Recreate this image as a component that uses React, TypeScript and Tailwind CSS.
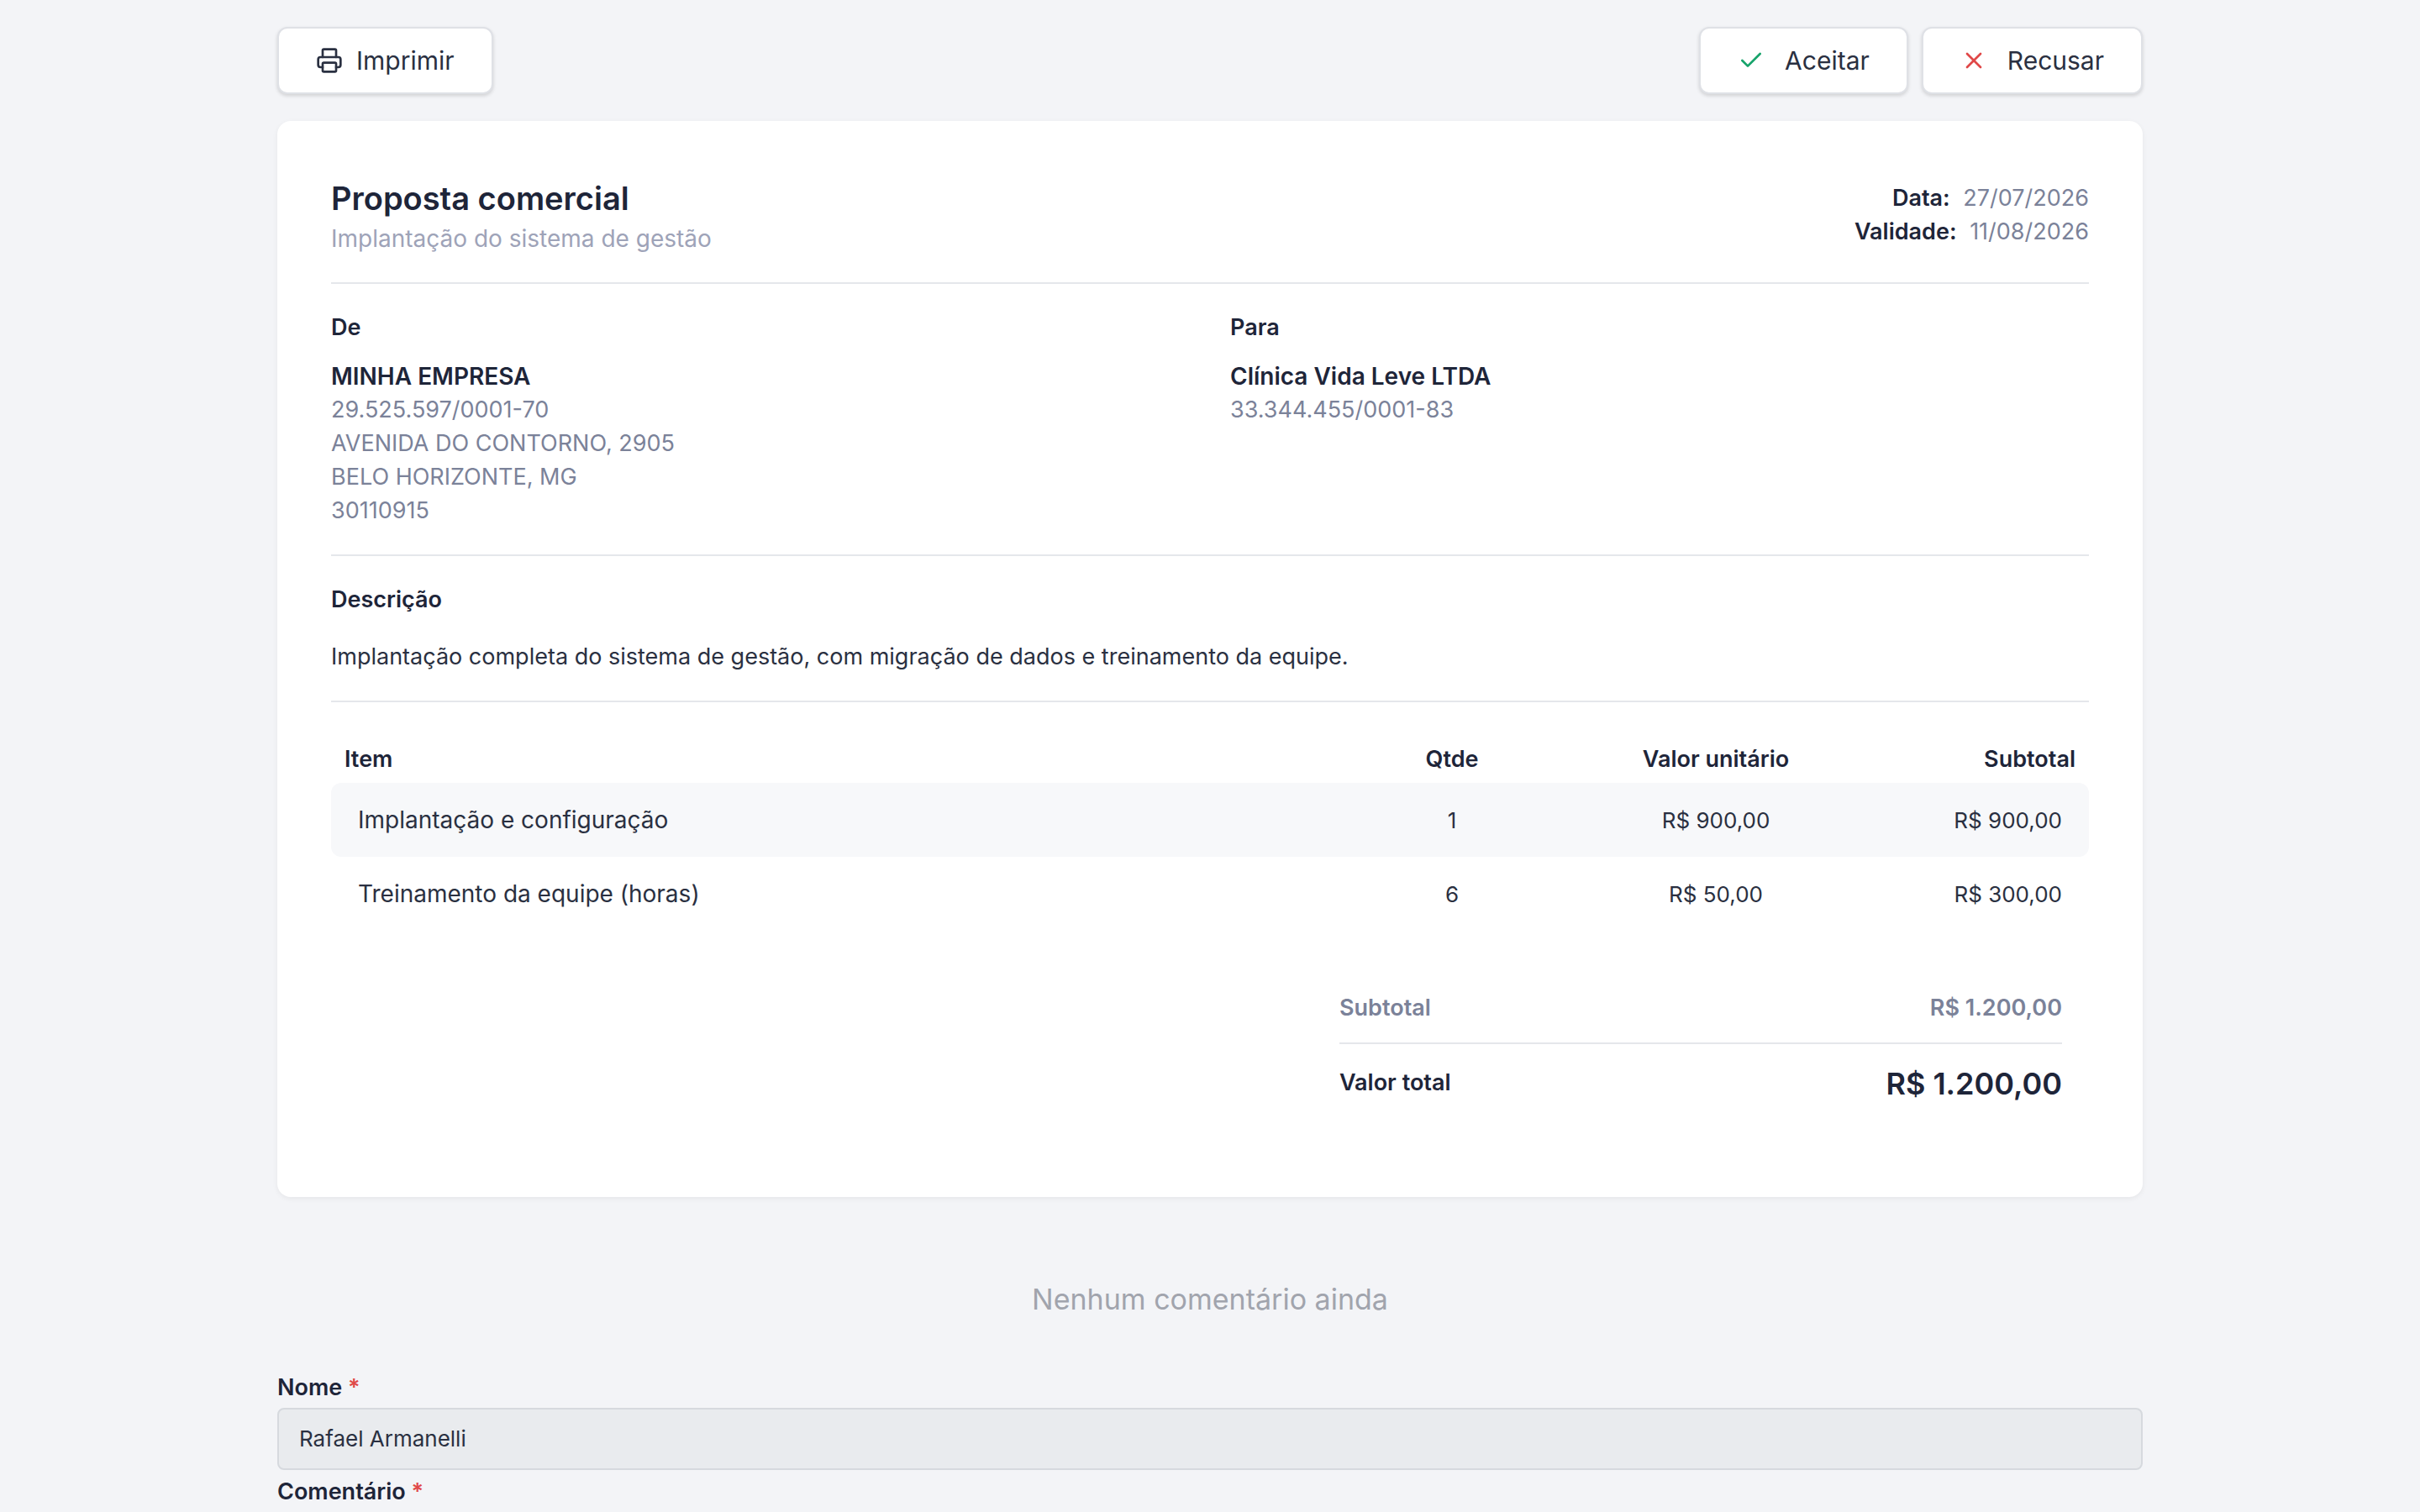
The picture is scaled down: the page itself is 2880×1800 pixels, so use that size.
import { Check, X, Printer } from 'lucide-react';

const items = [
  { name: 'Implantação e configuração', qty: 1, unit: 'R$ 900,00', subtotal: 'R$ 900,00' },
  { name: 'Treinamento da equipe (horas)', qty: 6, unit: 'R$ 50,00', subtotal: 'R$ 300,00' },
];

export default function App() {
  return (
    <div className="min-h-screen bg-[#f3f4f7] text-[#1e2539]" style={{ fontFamily: 'Inter, "Noto Sans", sans-serif' }}>
      <div className="[zoom:2]">
        <div className="mx-auto w-[1110px] pt-4">
          {/* Toolbar */}
          <div className="flex items-center justify-between">
            <button className="flex h-10 items-center gap-2 rounded-md border border-[#dfe1e6] bg-white px-[22px] text-[15px] text-[#2a3041] shadow-[0_1px_2px_rgba(0,0,0,0.15)]">
              <Printer className="h-4 w-4" strokeWidth={2} />
              Imprimir
            </button>
            <div className="flex gap-2">
              <button className="flex h-10 items-center gap-3 rounded-md border border-[#dfe1e6] bg-white px-[22px] text-[15px] text-[#2a3041] shadow-[0_1px_2px_rgba(0,0,0,0.15)]">
                <Check className="h-4 w-4 text-[#16a36a]" strokeWidth={2} />
                Aceitar
              </button>
              <button className="flex h-10 items-center gap-3 rounded-md border border-[#dfe1e6] bg-white px-[22px] text-[15px] text-[#2a3041] shadow-[0_1px_2px_rgba(0,0,0,0.15)]">
                <X className="h-4 w-4 text-[#e04848]" strokeWidth={2} />
                Recusar
              </button>
            </div>
          </div>

          {/* Card */}
          <div className="mt-4 rounded-lg bg-white px-8 pb-[54px] pt-8 shadow-[0_1px_3px_rgba(0,0,0,0.06)]">
            <div className="flex items-start justify-between border-b border-[#e5e7eb] pb-4">
              <div>
                <h1 className="text-[19px] font-semibold leading-7 text-[#1e2539]">Proposta comercial</h1>
                <p className="text-[14px] leading-5 text-[#9ea3b8]">Implantação do sistema de gestão</p>
              </div>
              <div className="pt-1 text-right text-[13.5px] leading-5">
                <div><span className="font-semibold">Data:</span> <span className="ml-1 text-[#7b8299]">27/07/2026</span></div>
                <div><span className="font-semibold">Validade:</span> <span className="ml-1 text-[#7b8299]">11/08/2026</span></div>
              </div>
            </div>

            <div className="grid grid-cols-2 gap-6 border-b border-[#e5e7eb] pb-4 pt-4 text-[13.5px]">
              <div>
                <div className="font-semibold leading-5">De</div>
                <div className="mt-[9px] text-[14px] font-semibold leading-5">MINHA EMPRESA</div>
                <div className="leading-5 text-[#7b8299]">
                  <div>29.525.597/0001-70</div>
                  <div>AVENIDA DO CONTORNO, 2905</div>
                  <div>BELO HORIZONTE, MG</div>
                  <div>30110915</div>
                </div>
              </div>
              <div>
                <div className="font-semibold leading-5">Para</div>
                <div className="mt-[9px] text-[14px] font-semibold leading-5">Clínica Vida Leve LTDA</div>
                <div className="leading-5 text-[#7b8299]">33.344.455/0001-83</div>
              </div>
            </div>

            <div className="border-b border-[#e5e7eb] pb-4 pt-4 text-[13.5px]">
              <div className="font-semibold leading-5">Descrição</div>
              <p className="mt-[14px] leading-5 text-[#2a3041]">
                Implantação completa do sistema de gestão, com migração de dados e treinamento da equipe.
              </p>
            </div>

            {/* Items */}
            <table className="mt-5 w-full text-[13.5px]">
              <thead>
                <tr className="h-7">
                  <th className="px-2 text-left font-semibold">Item</th>
                  <th className="w-[110px] text-center font-semibold">Qtde</th>
                  <th className="w-[204px] text-center font-semibold">Valor unitário</th>
                  <th className="w-[120px] pr-2 text-right font-semibold">Subtotal</th>
                </tr>
              </thead>
              <tbody className="text-[#2a3041]">
                {items.map((item, i) => (
                  <tr key={item.name} className={`h-11 ${i % 2 === 0 ? 'bg-[#f7f8fa]' : ''}`}>
                    <td className="rounded-l-md px-4 text-[14px]">{item.name}</td>
                    <td className="text-center text-[13px]">{item.qty}</td>
                    <td className="text-center text-[13px]">{item.unit}</td>
                    <td className="rounded-r-md px-4 text-right text-[13px]">{item.subtotal}</td>
                  </tr>
                ))}
              </tbody>
            </table>

            {/* Totals */}
            <div className="mt-[36px] flex justify-end pr-4">
              <div className="w-[430px] text-[13.5px]">
                <div className="flex items-center justify-between border-b border-[#e5e7eb] pb-[10px] font-semibold text-[#7b8299]">
                  <span>Subtotal</span>
                  <span>R$ 1.200,00</span>
                </div>
                <div className="flex items-center justify-between pt-[10px]">
                  <span className="font-semibold">Valor total</span>
                  <span className="text-[18px] font-semibold">R$ 1.200,00</span>
                </div>
              </div>
            </div>
          </div>

          {/* Comments */}
          <p className="mt-[48px] text-center text-[17px] text-[#a1a4ad]">Nenhum comentário ainda</p>

          <div className="mt-[30px] text-[13.5px]">
            <label className="block font-semibold leading-5">
              Nome <span className="text-[#e04848]">*</span>
            </label>
            <div className="mt-[2px] flex h-[37px] items-center rounded border border-[#d6d9de] bg-[#e9ebee] px-3 text-[13px] text-[#2a3041]">
              Rafael Armanelli
            </div>
            <label className="mt-[3px] block font-semibold leading-5">
              Comentário <span className="text-[#e04848]">*</span>
            </label>
          </div>
        </div>
      </div>
    </div>
  );
}
